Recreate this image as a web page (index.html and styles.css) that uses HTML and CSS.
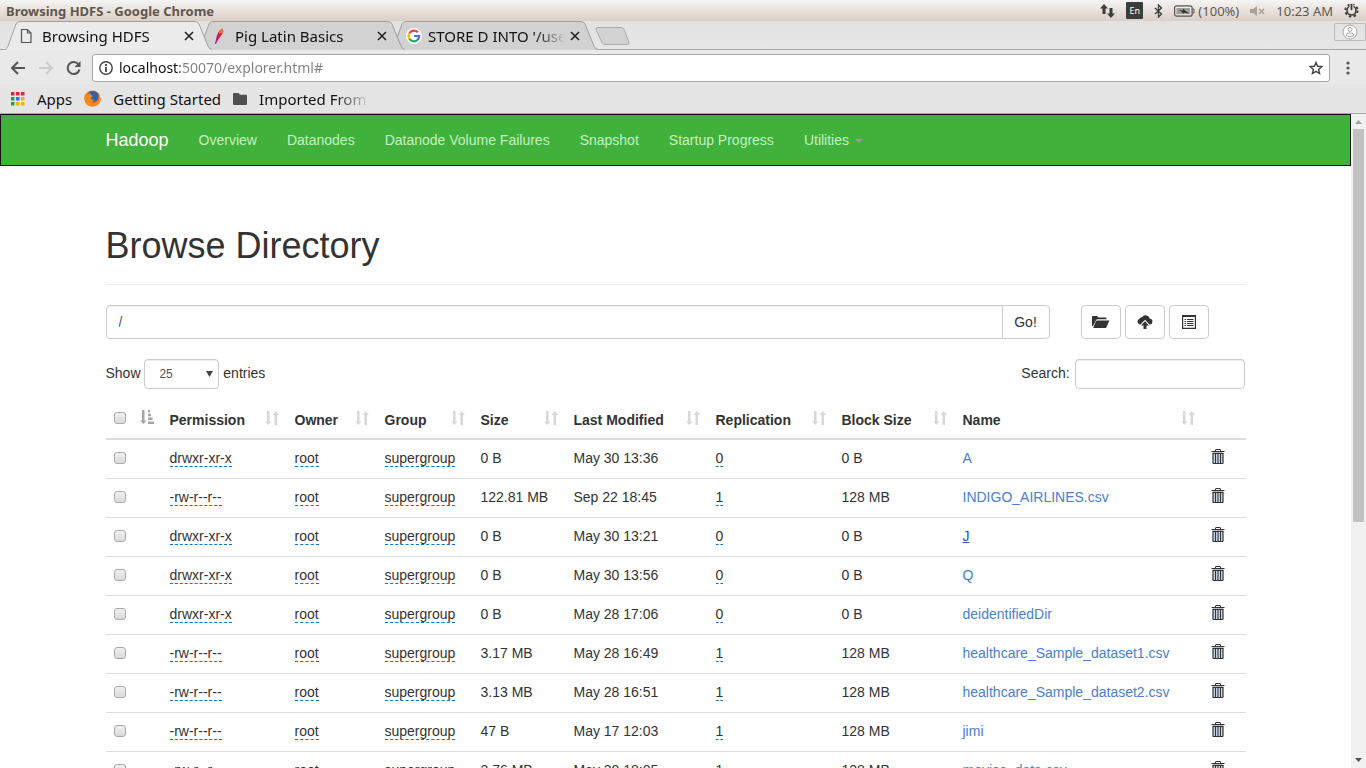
FILE: index.html
```
<!DOCTYPE html>
<html lang="en">
<head>
    <meta charset="UTF-8">
    <meta name="viewport" content="width=device-width, initial-scale=1.0">
    <title>Browsing HDFS</title>
    <link rel="stylesheet" href="styles.css">
</head>
<body>
    <!-- Shared icons -->
    <svg class="defs" aria-hidden="true">
        <symbol id="tab-close" viewBox="0 0 10 10"><path d="M1 1l8 8M9 1L1 9" fill="none" stroke="#222" stroke-width="1.6"/></symbol>
        <symbol id="sort-both" viewBox="0 0 14 15">
            <path d="M2 0h2.500v10.500h2L3.200 14 0 10.500h2zM9.500 14H12V4h2L10.800 0 7.500 4h2z" fill="#d8d8d8"/>
        </symbol>
        <symbol id="trash" viewBox="0 0 14 16">
            <path d="M4.500 2.500V1q0-.5.5-.5h4q.5 0 .5.500v1.500" fill="none" stroke="#333"/>
            <path d="M.5 2h13v1H.5z" fill="#333"/>
            <path d="M1.500 3h11v1.500h-11z" fill="#bbb"/>
            <path d="M2 4.500v9.500q0 .5.5.5h9q.5 0 .5-.5V4.500z" fill="#c9dbee" stroke="#333" stroke-width="1.200"/>
            <path d="M4.500 5v9M7 5v9M9.500 5v9" stroke="#333" stroke-width="1.100"/>
        </symbol>
        <symbol id="tab-shape" viewBox="0 0 206 29">
            <path class="tab-fill" d="M-1 29Q1 28 2 25L10 3Q11 .5 14 .5H189Q192 .5 193 3L202 25Q203 28 206 29z"/>
            <path d="M-1 28.500Q1 28 2 25L10 3Q11 .5 14 .5H189Q192 .5 193 3L202 25Q203 28 206 28.500" fill="none" stroke="#a0a0a0"/>
        </symbol>
    </svg>

    <!-- Desktop panel -->
    <header class="panel">
        <span class="panel-title">Browsing HDFS - Google Chrome</span>
        <div class="indicators">
            <svg width="15" height="14" viewBox="0 0 15 14"><path d="M4 0l4 4.500H5.500V10h-3V4.500H0zM11 14l-4-4.500h2.500V4h3v5.500H15z" fill="#3c3c3c"/></svg>
            <span class="lang">En</span>
            <svg width="9" height="14" viewBox="0 0 9 14"><path d="M1 4l6.500 6L4.500 13V1l3 3L1 10" fill="none" stroke="#3c3c3c" stroke-width="1.300"/></svg>
            <span class="battery">
                <svg width="21" height="12" viewBox="0 0 21 12"><rect x=".6" y=".8" width="17.500" height="10.400" rx="2" fill="none" stroke="#555" stroke-width="1.200"/><path d="M18.500 4h1.500v4h-1.500" fill="none" stroke="#555"/><rect x="2.500" y="3" width="13.500" height="6" fill="#a09c96"/><path d="M4 5l5 .5V3.500l2 2 4 3-5.500-1V9L7.500 6.500z" fill="#2e2e2e"/></svg>
                (100%)
            </span>
            <svg width="15" height="12" viewBox="0 0 15 12"><path d="M0 4h3l4-3v10L3 8H0z" fill="#a8a29b"/><path d="M9 4l5 5M14 4L9 9" stroke="#a8a29b" stroke-width="1.500"/></svg>
            <span class="clock">10:23 AM</span>
            <svg width="15" height="15" viewBox="0 0 15 15"><circle cx="7.500" cy="7.500" r="4.500" fill="none" stroke="#3c3c3c" stroke-width="1.600"/><circle cx="7.500" cy="7.500" r="6.200" fill="none" stroke="#3c3c3c" stroke-width="1.800" stroke-dasharray="2.400 2.470"/><path d="M5.500 0h4v6h-4z" fill="#e6e0da"/><path d="M7.500 1v6" stroke="#3c3c3c" stroke-width="1.800"/></svg>
        </div>
    </header>

    <!-- Browser tabs -->
    <div class="tabs">
        <div class="tab active">
            <svg class="tab-bg"><use href="#tab-shape"/></svg>
            <svg class="favicon" viewBox="0 0 16 16"><path d="M1.500 1.500h6l3.500 3.500v9.500H1.500zM7.500 1.500V5H11" fill="none" stroke="#555" stroke-width="1.200"/></svg>
            <span class="tab-title">Browsing HDFS</span>
            <button class="close" aria-label="Close tab"><svg width="10" height="10"><use href="#tab-close"/></svg></button>
        </div>
        <div class="tab">
            <svg class="tab-bg"><use href="#tab-shape"/></svg>
            <svg class="favicon" viewBox="0 0 16 16"><path d="M2.500 16L3.500 9Q5 3 9 .5q1.500 2 .5 5L6 10.500z" fill="#cf1b52"/><path d="M5.500 5.500Q7 1.500 9.200.3q1.600 2 .6 5z" fill="#f2722a"/><path d="M2.500 16l1.500-6" stroke="#8f2a82"/></svg>
            <span class="tab-title">Pig Latin Basics</span>
            <button class="close" aria-label="Close tab"><svg width="10" height="10"><use href="#tab-close"/></svg></button>
        </div>
        <div class="tab">
            <svg class="tab-bg"><use href="#tab-shape"/></svg>
            <svg class="favicon" viewBox="0 0 16 16"><circle cx="8" cy="8" r="8" fill="#fff"/><g fill="none" stroke-width="2.200"><path d="M11.800 4.200A5.300 5.300 0 0 0 3.400 5.300" stroke="#ea4335"/><path d="M3.400 5.300a5.300 5.300 0 0 0 0 5.400" stroke="#fbbc05"/><path d="M3.400 10.700a5.300 5.300 0 0 0 7.800 1.500" stroke="#1fa855"/><path d="M11.200 12.200A5.300 5.300 0 0 0 13.200 8H8" stroke="#4d6bf5"/></g></svg>
            <span class="tab-title">STORE D INTO '/user</span>
            <button class="close" aria-label="Close tab"><svg width="10" height="10"><use href="#tab-close"/></svg></button>
        </div>
        <button class="new-tab" aria-label="New tab"><svg width="35" height="18" viewBox="0 0 35 18"><path d="M3 .5h23q2 0 3 2l5 13q.5 2-1.500 2H10q-2 0-3-2L1 2.500Q.5.500 3 .5z" fill="#d3d3d3" stroke="#aaa"/></svg></button>
        <button class="profile" aria-label="Profile"><svg width="16" height="16" viewBox="0 0 16 16"><g fill="#fff" stroke="#a5a5a5"><circle cx="8" cy="8" r="7"/><circle cx="8" cy="5.500" r="2"/><path d="M4 11q0-2 4-2t4 2q-4 3.500-8 0z"/></g></svg></button>
    </div>

    <!-- Address bar -->
    <div class="toolbar">
        <button aria-label="Back"><svg width="16" height="14" viewBox="0 0 16 14"><path d="M14 7H2M7 1L1 7l6 6" fill="none" stroke="#555" stroke-width="2"/></svg></button>
        <button aria-label="Forward"><svg width="16" height="14" viewBox="0 0 16 14"><path d="M1 7h13M8 1l6 6-6 6" fill="none" stroke="#ccc" stroke-width="2"/></svg></button>
        <button aria-label="Reload"><svg width="16" height="16" viewBox="0 0 16 16"><path d="M13.500 4.500A6 6 0 1 0 14.500 9.500" fill="none" stroke="#555" stroke-width="2"/><path d="M15.500 1v6H9.500z" fill="#555"/></svg></button>
        <div class="address">
            <svg width="14" height="14" viewBox="0 0 14 14"><circle cx="7" cy="7" r="6.200" fill="none" stroke="#444" stroke-width="1.400"/><path d="M7 6v5M7 3v2" stroke="#444" stroke-width="1.800"/></svg>
            <input class="url" type="text" aria-label="Address" value="localhost:50070/explorer.html#">
            <button aria-label="Bookmark this page"><svg width="14" height="14" viewBox="0 0 14 14"><path d="M7 1.500l1.600 3.800 4.200.4-3.200 2.700 1 4.100L7 10.300l-3.600 2.200 1-4.100L1.200 5.700l4.200-.4z" fill="none" stroke="#444" stroke-width="1.400"/></svg></button>
        </div>
        <button class="menu" aria-label="Menu"><svg width="4" height="14" viewBox="0 0 4 14"><g fill="#555"><circle cx="2" cy="2" r="1.600"/><circle cx="2" cy="7" r="1.600"/><circle cx="2" cy="12" r="1.600"/></g></svg></button>
    </div>

    <!-- Bookmarks -->
    <nav class="bookmarks">
        <a class="apps" href="#"><svg width="14" height="14" viewBox="0 0 14 14"><path d="M0 0h3.500v3.500H0zM5 0h3.500v3.500H5zM10 0h3.500v3.500H10z" fill="#e8203a"/><path d="M0 5h3.500v3.500H0z" fill="#1fa04f"/><path d="M5 5h3.500v3.500H5z" fill="#4664f0"/><path d="M10 5h3.500v3.500H10z" fill="#f7b400"/><path d="M0 10h3.500v3.500H0z" fill="#1fa04f"/><path d="M5 10h3.500v3.500H5zM10 10h3.500v3.500H10z" fill="#f7b400"/></svg>Apps</a>
        <a class="firefox" href="#"><svg width="17" height="17" viewBox="0 0 17 17"><circle cx="8.500" cy="8.500" r="8" fill="#f0661b"/><circle cx="8.800" cy="6.500" r="5.600" fill="#2c62ae"/><path d="M1 4Q3 4.500 4 4q1.500-1 3-.5L6 5q3 0 2.500 1.500L6.500 8q1 2.500 4 1.500-1 3-4.500 2.500 5 3 9-2Q17 7 14 3q4 5 2 9-3 5-8.500 4.500Q2 16 .7 11 0 7 1 4z" fill="#f48a1d"/><path d="M15 5q1.500 4-1 7.500Q16 11 16.400 8z" fill="#ffcf3a"/></svg>Getting Started</a>
        <a class="folder" href="#"><svg width="14" height="12" viewBox="0 0 14 12"><path d="M1 0h4.500L7 1.800h6q1 0 1 1V11q0 1-1 1H1q-1 0-1-1V1q0-1 1-1z" fill="#505050"/></svg><span>Imported From F</span></a>
    </nav>

    <div class="viewport">
        <div class="page">
            <nav class="navbar">
                <div class="container">
                    <a class="brand" href="#">Hadoop</a>
                    <a href="#">Overview</a>
                    <a href="#">Datanodes</a>
                    <a href="#">Datanode Volume Failures</a>
                    <a href="#">Snapshot</a>
                    <a href="#">Startup Progress</a>
                    <a href="#">Utilities <span class="caret"></span></a>
                </div>
            </nav>

            <main class="container">
                <div class="page-header"><h1>Browse Directory</h1></div>

                <div class="path-row">
                    <div class="input-group">
                        <input type="text" class="form-control" aria-label="Directory" value="/">
                        <button class="btn">Go!</button>
                    </div>
                    <div class="actions">
                        <button class="btn" aria-label="Create directory"><svg width="18" height="14" viewBox="0 0 18 14"><path d="M0 11V2q0-1 1-1h4l1.500 1.500h7q1 0 1 1v.8H5.500q-1 0-1.500 1L1 11z" fill="#333"/><path d="M5 5.500h12.500L14 13H1.200L4 6q.3-.5 1-.5z" fill="#333"/></svg></button>
                        <button class="btn" aria-label="Upload files"><svg width="16" height="14" viewBox="0 0 16 14"><path d="M3.500 9.500H3a3 3 0 0 1-.5-5.800Q3 2 5 2.200 6.500 0 9 .3q3 .5 3.700 3.200Q15.500 4 15.500 6.500T13 9.500h-.5L8 4.800z" fill="#333"/><path d="M8 6.200l4 4.300H9.500V14h-3v-3.500H4z" fill="#333"/></svg></button>
                        <button class="btn" aria-label="Cut and paste"><svg width="14" height="14" viewBox="0 0 14 14"><path d="M.6.6h12.800v12.800H.6z" fill="#fff" stroke="#333" stroke-width="1.200"/><path d="M0 0h14v2H0z" fill="#333"/><path d="M2.500 4.500h1.500M2.500 6.500h1.500M2.500 8.500h1.500M2.500 10.500h1.500M5 4.500h6.500M5 6.500h6.500M5 8.500h6.500M5 10.500h6.500" stroke="#333"/></svg></button>
                    </div>
                </div>

                <div class="table-tools">
                    <label>Show
                        <select class="form-control">
                            <option>25</option>
                            <option>50</option>
                            <option>100</option>
                        </select>
                        entries</label>
                    <label class="search">Search:
                        <input type="search" class="form-control"></label>
                </div>

                <table class="explorer">
                    <colgroup>
                        <col class="c-check"><col class="c-perm"><col class="c-owner"><col class="c-group"><col class="c-size"><col class="c-date"><col class="c-repl"><col class="c-block"><col><col class="c-trash">
                    </colgroup>
                    <thead>
                        <tr>
                            <th><svg class="sort asc" viewBox="0 0 14 15"><path d="M2 0h2.500v10.500h2L3.200 14 0 10.500h2zM8 0h2v2.500H8zM8 3.800h3v2.500H8zM8 7.600h4.500v2.500H8zM8 11.500h6V14H8z" fill="#a5a5a5"/></svg><input type="checkbox" aria-label="Select all"></th>
                            <th><svg class="sort"><use href="#sort-both"/></svg>Permission</th>
                            <th><svg class="sort"><use href="#sort-both"/></svg>Owner</th>
                            <th><svg class="sort"><use href="#sort-both"/></svg>Group</th>
                            <th><svg class="sort"><use href="#sort-both"/></svg>Size</th>
                            <th><svg class="sort"><use href="#sort-both"/></svg>Last Modified</th>
                            <th><svg class="sort"><use href="#sort-both"/></svg>Replication</th>
                            <th><svg class="sort"><use href="#sort-both"/></svg>Block Size</th>
                            <th><svg class="sort"><use href="#sort-both"/></svg>Name</th>
                            <th></th>
                        </tr>
                    </thead>
                    <tbody>
                        <tr>
                            <td><input type="checkbox" aria-label="Select A"></td>
                            <td><span class="editable">drwxr-xr-x</span></td>
                            <td><span class="editable">root</span></td>
                            <td><span class="editable">supergroup</span></td>
                            <td>0 B</td>
                            <td>May 30 13:36</td>
                            <td><span class="editable">0</span></td>
                            <td>0 B</td>
                            <td><a href="#">A</a></td>
                            <td><button class="delete" aria-label="Delete A"><svg><use href="#trash"/></svg></button></td>
                        </tr>
                        <tr>
                            <td><input type="checkbox" aria-label="Select INDIGO_AIRLINES.csv"></td>
                            <td><span class="editable">-rw-r--r--</span></td>
                            <td><span class="editable">root</span></td>
                            <td><span class="editable">supergroup</span></td>
                            <td>122.81 MB</td>
                            <td>Sep 22 18:45</td>
                            <td><span class="editable">1</span></td>
                            <td>128 MB</td>
                            <td><a href="#">INDIGO_AIRLINES.csv</a></td>
                            <td><button class="delete" aria-label="Delete INDIGO_AIRLINES.csv"><svg><use href="#trash"/></svg></button></td>
                        </tr>
                        <tr>
                            <td><input type="checkbox" aria-label="Select J"></td>
                            <td><span class="editable">drwxr-xr-x</span></td>
                            <td><span class="editable">root</span></td>
                            <td><span class="editable">supergroup</span></td>
                            <td>0 B</td>
                            <td>May 30 13:21</td>
                            <td><span class="editable">0</span></td>
                            <td>0 B</td>
                            <td><a class="focused" href="#">J</a></td>
                            <td><button class="delete" aria-label="Delete J"><svg><use href="#trash"/></svg></button></td>
                        </tr>
                        <tr>
                            <td><input type="checkbox" aria-label="Select Q"></td>
                            <td><span class="editable">drwxr-xr-x</span></td>
                            <td><span class="editable">root</span></td>
                            <td><span class="editable">supergroup</span></td>
                            <td>0 B</td>
                            <td>May 30 13:56</td>
                            <td><span class="editable">0</span></td>
                            <td>0 B</td>
                            <td><a href="#">Q</a></td>
                            <td><button class="delete" aria-label="Delete Q"><svg><use href="#trash"/></svg></button></td>
                        </tr>
                        <tr>
                            <td><input type="checkbox" aria-label="Select deidentifiedDir"></td>
                            <td><span class="editable">drwxr-xr-x</span></td>
                            <td><span class="editable">root</span></td>
                            <td><span class="editable">supergroup</span></td>
                            <td>0 B</td>
                            <td>May 28 17:06</td>
                            <td><span class="editable">0</span></td>
                            <td>0 B</td>
                            <td><a href="#">deidentifiedDir</a></td>
                            <td><button class="delete" aria-label="Delete deidentifiedDir"><svg><use href="#trash"/></svg></button></td>
                        </tr>
                        <tr>
                            <td><input type="checkbox" aria-label="Select healthcare_Sample_dataset1.csv"></td>
                            <td><span class="editable">-rw-r--r--</span></td>
                            <td><span class="editable">root</span></td>
                            <td><span class="editable">supergroup</span></td>
                            <td>3.17 MB</td>
                            <td>May 28 16:49</td>
                            <td><span class="editable">1</span></td>
                            <td>128 MB</td>
                            <td><a href="#">healthcare_Sample_dataset1.csv</a></td>
                            <td><button class="delete" aria-label="Delete healthcare_Sample_dataset1.csv"><svg><use href="#trash"/></svg></button></td>
                        </tr>
                        <tr>
                            <td><input type="checkbox" aria-label="Select healthcare_Sample_dataset2.csv"></td>
                            <td><span class="editable">-rw-r--r--</span></td>
                            <td><span class="editable">root</span></td>
                            <td><span class="editable">supergroup</span></td>
                            <td>3.13 MB</td>
                            <td>May 28 16:51</td>
                            <td><span class="editable">1</span></td>
                            <td>128 MB</td>
                            <td><a href="#">healthcare_Sample_dataset2.csv</a></td>
                            <td><button class="delete" aria-label="Delete healthcare_Sample_dataset2.csv"><svg><use href="#trash"/></svg></button></td>
                        </tr>
                        <tr>
                            <td><input type="checkbox" aria-label="Select jimi"></td>
                            <td><span class="editable">-rw-r--r--</span></td>
                            <td><span class="editable">root</span></td>
                            <td><span class="editable">supergroup</span></td>
                            <td>47 B</td>
                            <td>May 17 12:03</td>
                            <td><span class="editable">1</span></td>
                            <td>128 MB</td>
                            <td><a href="#">jimi</a></td>
                            <td><button class="delete" aria-label="Delete jimi"><svg><use href="#trash"/></svg></button></td>
                        </tr>
                        <tr>
                            <td><input type="checkbox" aria-label="Select movies_data.csv"></td>
                            <td><span class="editable">-rw-r--r--</span></td>
                            <td><span class="editable">root</span></td>
                            <td><span class="editable">supergroup</span></td>
                            <td>2.76 MB</td>
                            <td>May 30 18:05</td>
                            <td><span class="editable">1</span></td>
                            <td>128 MB</td>
                            <td><a href="#">movies_data.csv</a></td>
                            <td><button class="delete" aria-label="Delete movies_data.csv"><svg><use href="#trash"/></svg></button></td>
                        </tr>
                    </tbody>
                </table>
            </main>
        </div>

        <div class="scrollbar" aria-hidden="true">
            <svg width="15" height="15" viewBox="0 0 15 15"><path d="M4 10l3.500-4 3.500 4z" fill="#a3a3a3"/></svg>
            <div class="track"><div class="thumb"></div></div>
            <svg width="15" height="15" viewBox="0 0 15 15"><path d="M4 5h7L7.500 9z" fill="#505050"/></svg>
        </div>
    </div>
</body>
</html>
```
FILE: styles.css
```
* {
    box-sizing: border-box;
}
body {
    margin: 0;
    height: 100vh;
    display: flex;
    flex-direction: column;
    overflow: hidden;
    background: #fff;
    color: #333;
    font: 14px/20px "Liberation Sans", Arial, sans-serif;
}
button, input, select {
    font: inherit;
    color: inherit;
}
button {
    padding: 0;
    border: 0;
    background: none;
    cursor: pointer;
}
svg {
    flex: none;
}
a {
    color: #4a80cf;
    text-decoration: none;
}
.defs {
    display: none;
}

/* desktop panel */
.panel {
    height: 21px;
    flex: none;
    display: flex;
    align-items: center;
    justify-content: space-between;
    padding: 0 7px 0 6px;
    background: linear-gradient(#f6f4f2, #dacfc6);
    color: #5f5750;
    font-family: "Noto Sans", sans-serif;
    font-size: 13px;
}
.panel-title {
    font-weight: bold;
}
.indicators {
    display: flex;
    align-items: center;
    gap: 11px;
}
.lang {
    width: 17px;
    height: 17px;
    border-radius: 1px;
    background: #3c3c3c;
    color: #fff;
    font-size: 9px;
    line-height: 17px;
    text-align: center;
}
.battery {
    display: flex;
    align-items: center;
    gap: 3px;
}

/* tabs */
.tabs {
    height: 29px;
    flex: none;
    display: flex;
    padding-left: 6px;
    background: linear-gradient(#e2e2e2, #e6e6e6);
    box-shadow: inset 0 -1px #a6a6a6;
    color: #111;
    font-family: "Noto Sans", sans-serif;
    font-size: 15px;
}
.tab {
    position: relative;
    z-index: 1;
    width: 206px;
    margin-right: -13px;
    padding: 0 18px 0 14px;
    display: flex;
    align-items: center;
}
.tab:nth-child(2) {
    z-index: 2;
}
.tab.active {
    z-index: 3;
}
.tab-bg {
    position: absolute;
    top: 0;
    left: 0;
    z-index: -1;
    width: 206px;
    height: 29px;
    overflow: visible;
    fill: #d2d2d2;
}
.active .tab-bg {
    fill: #ebebeb;
}
.favicon {
    width: 16px;
    height: 16px;
    margin-right: 6px;
}
.tab-title {
    flex: 1;
    overflow: hidden;
    white-space: nowrap;
    -webkit-mask-image: linear-gradient(90deg, #000 108px, transparent 138px);
    mask-image: linear-gradient(90deg, #000 108px, transparent 138px);
}
.close {
    width: 16px;
    display: flex;
    justify-content: flex-end;
}
.new-tab {
    display: flex;
    align-items: center;
    margin-left: 10px;
}
.profile {
    width: 32px;
    height: 18px;
    margin: 2px 0 0 auto;
    display: flex;
    align-items: center;
    justify-content: center;
    border: 1px solid #bbb;
    border-radius: 2px;
}

/* address bar */
.toolbar {
    height: 34px;
    flex: none;
    display: flex;
    align-items: center;
    gap: 11px;
    padding: 2px 15px 0 11px;
    background: #e9e9e9;
}
.toolbar button {
    display: flex;
}
.address {
    flex: 1;
    height: 28px;
    display: flex;
    align-items: center;
    gap: 6px;
    padding: 0 6px;
    border: 1px solid #a6a6a6;
    border-radius: 3px;
    background: #fff;
}
.menu {
    margin: 0 1px 0 5px;
}
.url {
    flex: 1;
    min-width: 0;
    padding: 0;
    border: 0;
    outline: 0;
    font-family: "Noto Sans", sans-serif;
    /* host dark, rest of the url grey */
    background: linear-gradient(90deg, #111 61px, #808080 61px);
    -webkit-background-clip: text;
    background-clip: text;
    -webkit-text-fill-color: transparent;
}

/* bookmarks */
.bookmarks {
    height: 30px;
    flex: none;
    display: flex;
    align-items: center;
    padding-left: 11px;
    background: #e5e5e5;
    border-bottom: 1px solid #a6a6a6;
    font-family: "Noto Sans", sans-serif;
    font-size: 15px;
}
.bookmarks a {
    display: flex;
    align-items: center;
    gap: 12px;
    margin-right: 12px;
    color: #111;
}
.folder span {
    width: 110px;
    overflow: hidden;
    white-space: nowrap;
    -webkit-mask-image: linear-gradient(90deg, #000 75px, transparent 112px);
    mask-image: linear-gradient(90deg, #000 75px, transparent 112px);
}

/* page */
.viewport {
    flex: 1;
    min-height: 0;
    display: flex;
}
.page {
    flex: 1;
    min-width: 0;
    overflow: hidden;
}
.container {
    max-width: 1140px;
    margin: 0 auto;
}
.navbar {
    border: 1px solid #101010;
    background: #40b13a;
}
.navbar .container {
    display: flex;
    gap: 30px;
}
.navbar a {
    padding: 15px 0;
    color: #c8efc5;
}
.navbar .brand {
    color: #fff;
    font-size: 18px;
}
.caret {
    display: inline-block;
    margin-left: 2px;
    vertical-align: middle;
    border-top: 4px solid #999;
    border-left: 4px solid transparent;
    border-right: 4px solid transparent;
}
.page-header {
    margin: 60px 0 20px;
    padding-bottom: 9px;
    border-bottom: 1px solid #eee;
}
h1 {
    margin: 0 0 9px;
    font-size: 36px;
    font-weight: 500;
    line-height: 40px;
}
.path-row {
    display: flex;
    gap: 31px;
    margin-bottom: 20px;
}
.input-group {
    flex: 1;
    display: flex;
}
.form-control {
    border: 1px solid #ccc;
    border-radius: 4px;
    background: #fff;
    box-shadow: inset 0 1px 1px rgba(0, 0, 0, 0.075);
    color: #555;
}
.btn {
    height: 34px;
    padding: 0 12px;
    border: 1px solid #ccc;
    border-radius: 4px;
    background: #fff;
    color: #333;
}
.input-group .form-control {
    flex: 1;
    min-width: 0;
    height: 34px;
    padding: 6px 12px;
    border-radius: 4px 0 0 4px;
}
.input-group .btn {
    width: 48px;
    padding: 0;
    margin-left: -1px;
    border-radius: 0 4px 4px 0;
}
.actions {
    width: 165px;
    display: flex;
    gap: 4px;
}
.actions .btn {
    width: 40px;
    padding: 0;
    display: flex;
    align-items: center;
    justify-content: center;
}
.table-tools {
    height: 30px;
    display: flex;
    justify-content: space-between;
    margin-bottom: 13px;
}
.table-tools .form-control {
    height: 30px;
    font-size: 12px;
    vertical-align: middle;
}
select.form-control {
    width: 75px;
    padding: 0 14px;
    appearance: none;
    background: #fff url("data:image/svg+xml,%3Csvg xmlns='http://www.w3.org/2000/svg' width='7' height='6'%3E%3Cpath d='M0 0h7L3.5 6z' fill='%23444'/%3E%3C/svg%3E") no-repeat right 5px center;
}
.search .form-control {
    width: 170px;
    margin: 0 1px;
    padding: 5px 10px;
}

/* file listing */
.explorer {
    width: 100%;
    table-layout: fixed;
    border-collapse: collapse;
}
.c-check { width: 56px; }
.c-perm { width: 125px; }
.c-owner { width: 90px; }
.c-group { width: 96px; }
.c-size { width: 93px; }
.c-date { width: 142px; }
.c-repl { width: 126px; }
.c-block { width: 121px; }
.c-trash { width: 43px; }
th, td {
    padding: 8px;
    text-align: left;
    vertical-align: top;
    white-space: nowrap;
}
th {
    border-bottom: 2px solid #ddd;
}
td {
    height: 39px;
    border-bottom: 1px solid #ddd;
}
.sort {
    float: right;
    width: 14px;
    height: 15px;
    margin-top: 1px;
}
.asc {
    margin-top: 0;
}
.explorer input {
    appearance: none;
    display: block;
    width: 12px;
    height: 12px;
    margin: 4px 0 0;
    border: 1px solid #acacac;
    border-radius: 3px;
    background: linear-gradient(#f0f0f0, #dadada);
}
.explorer th input {
    margin-top: 2px;
}
.editable {
    border-bottom: 1px dashed #0b74d1;
}
.focused {
    color: #2a5da8;
    text-decoration: underline;
}
.delete {
    display: block;
    padding-top: 1px;
}
.delete svg {
    display: block;
    width: 14px;
    height: 16px;
}

/* scrollbar */
.scrollbar {
    width: 15px;
    display: flex;
    flex-direction: column;
    background: #f1f1f1;
}
.track {
    flex: 1;
    padding: 0 2px;
}
.thumb {
    height: 63%;
    background: #c1c1c1;
}
```
